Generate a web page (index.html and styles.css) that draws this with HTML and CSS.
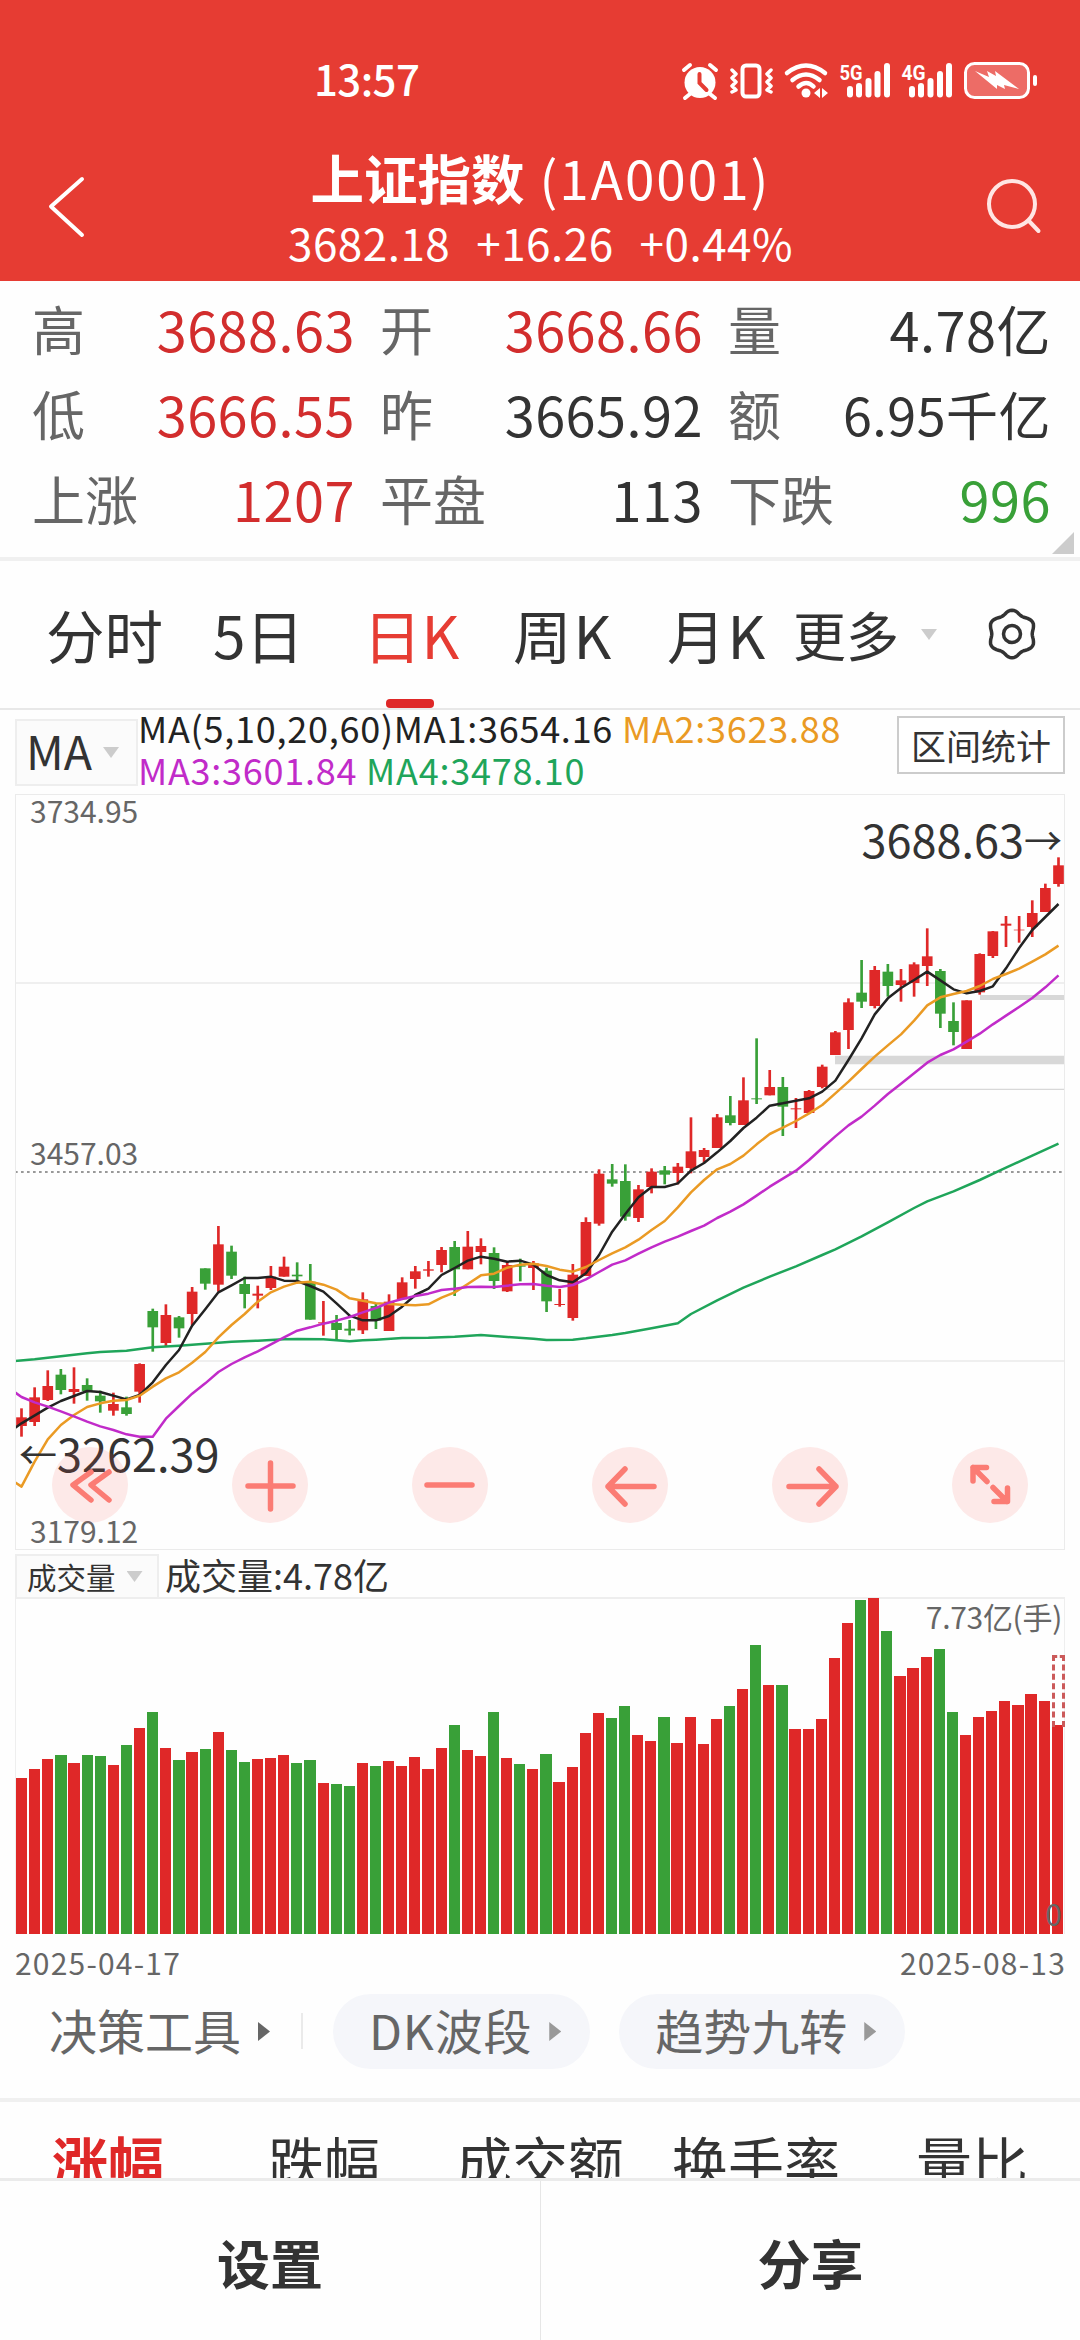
FILE: index.html
```html
<!DOCTYPE html>
<html lang="zh-CN">
<head>
    <meta charset="UTF-8">
    <meta name="viewport" content="width=device-width, initial-scale=1.0">
    <title>上证指数</title>

    <link rel="stylesheet" href="styles.css">
</head>
<body>

    <header class="header">
        <div class="status">
            <span class="clock">13:57</span>
            <svg class="statusIcons" width="360" height="40" viewBox="0 0 360 40">
                <!-- alarm -->
                <circle cx="19" cy="20.500" r="15.500" fill="#fff"/>
                <path d="M3 8l6-5M35 8l-6-5M9 32l-5 4M29 32l5 4" stroke="#fff" stroke-width="4" stroke-linecap="round"/>
                <path d="M18.500 12v9l7 7" stroke="#e63c33" stroke-width="4" fill="none" stroke-linecap="round"/>
                <!-- vibrate -->
                <rect x="61.500" y="3.500" width="17" height="31" rx="3.500" fill="none" stroke="#fff" stroke-width="4"/>
                <path d="M51 8l4 4-4 4 4 4-4 4 4 4-4 2M90 8l-4 4 4 4-4 4 4 4-4 4 4 2" fill="none" stroke="#fff" stroke-width="3.500" stroke-linejoin="round" stroke-linecap="round"/>
                <!-- wifi -->
                <g fill="none" stroke="#fff" stroke-width="4.500" stroke-linecap="round">
                    <path d="M106 11q19-15 38 0"/>
                    <path d="M111.500 18q13.500-11 27 0"/>
                    <path d="M117.500 24.500q8-7 15 0"/>
                </g>
                <circle cx="125" cy="31" r="4.500" fill="#fff"/>
                <path d="M133 31l6-5v10zM147 31l-6-5v10z" fill="#fff"/>
                <!-- signals -->
                <g fill="#fff">
                    <text x="158.500" y="17.500" class="net" textLength="23" lengthAdjust="spacingAndGlyphs">5G</text>
                    <rect x="166" y="24" width="6" height="11.500" rx="3"/>
                    <rect x="175" y="21" width="6" height="14.500" rx="3"/>
                    <rect x="184.500" y="16" width="6" height="19.500" rx="3"/>
                    <rect x="193.500" y="9" width="6" height="26.500" rx="3"/>
                    <rect x="203" y="1" width="6" height="34.500" rx="3"/>
                    <text x="220.500" y="17.500" class="net" textLength="24" lengthAdjust="spacingAndGlyphs">4G</text>
                    <rect x="228" y="24" width="6" height="11.500" rx="3"/>
                    <rect x="237" y="21" width="6" height="14.500" rx="3"/>
                    <rect x="246.500" y="16" width="6" height="19.500" rx="3"/>
                    <rect x="256" y="9" width="6" height="26.500" rx="3"/>
                    <rect x="265" y="1" width="6" height="34.500" rx="3"/>
                </g>
                <!-- battery -->
                <rect x="284.500" y="1.500" width="63" height="34" rx="9" fill="#ed6c66" stroke="#fff" stroke-width="3"/>
                <rect x="352" y="13" width="4" height="11" rx="2" fill="#fff"/>
                <path d="M294 9l14 6-2-6 9 5-1-5 24 18-15-4 1 4-8-4v4z" fill="#fff"/>
            </svg>
        </div>
        <div class="titleBar">
            <svg class="back" width="40" height="64" viewBox="0 0 40 64" fill="none" stroke="#fff" stroke-width="4">
                <path d="M35 4L4 31.500 35 60" stroke-linecap="round" stroke-linejoin="round"/>
            </svg>
            <div class="stock">
                <h1><b>上证指数</b> <span>(1A0001)</span></h1>
                <p><span>3682.18</span><span>+16.26</span><span>+0.44%</span></p>
            </div>
            <svg class="search" width="56" height="56" viewBox="0 0 56 56" fill="none" stroke="#ffe5e3" stroke-width="4" stroke-linecap="round">
                <circle cx="26" cy="26" r="23"/>
                <path d="M42.500 42.500L52.500 53"/>
            </svg>
        </div>
    </header>

    <section class="quote">
        <div class="item"><span>高</span><b class="up">3688.63</b></div>
        <div class="item"><span>开</span><b class="up">3668.66</b></div>
        <div class="item"><span>量</span><b>4.78亿</b></div>
        <div class="item"><span>低</span><b class="up">3666.55</b></div>
        <div class="item"><span>昨</span><b>3665.92</b></div>
        <div class="item"><span>额</span><b class="long">6.95千亿</b></div>
        <div class="item"><span>上涨</span><b class="up">1207</b></div>
        <div class="item"><span>平盘</span><b>113</b></div>
        <div class="item"><span>下跌</span><b class="down">996</b></div>
        <i class="corner"></i>
    </section>

    <nav class="period">
        <span>分时</span>
        <span>5日</span>
        <span class="active">日K</span>
        <span class="wide">周K</span>
        <span class="wide">月K</span>
        <span class="more">更多</span>
        <i class="arrowDown"></i>
        <svg class="gear" width="52" height="52" viewBox="0 0 52 52" fill="none" stroke="#333" stroke-width="3.500" stroke-linejoin="round">
            <path id="gearPath" d=""/>
            <circle cx="26" cy="26" r="8.500"/>
        </svg>
    </nav>

    <div class="maRow">
        <div class="select maSelect">MA<i class="arrowDown"></i></div>
        <div class="maText">
            <p><span class="ma1">MA(5,10,20,60)MA1:3654.16</span> <span class="ma2">MA2:3623.88</span></p>
            <p><span class="ma3">MA3:3601.84</span> <span class="ma4">MA4:3478.10</span></p>
        </div>
        <button class="range">区间统计</button>
    </div>

    <div class="kChart">
        <svg id="kline" width="1050" height="756" viewBox="45 -198 3150 2268"></svg>
        <span class="axis axisTop">3734.95</span>
        <span class="axis axisMid">3457.03</span>
        <span class="axis axisBottom">3179.12</span>
        <span class="mark high">3688.63<em>→</em></span>
        <span class="mark low"><em>←</em>3262.39</span>
        <div class="tools">
            <svg viewBox="0 0 76 76"><path d="M39 25L21 38l18 15M57 25L39 38l18 15"/></svg>
            <svg viewBox="0 0 76 76"><path d="M16 39h45M38.500 16v46"/></svg>
            <svg viewBox="0 0 76 76"><path d="M15 38h45"/></svg>
            <svg viewBox="0 0 76 76"><path d="M16 39.500h46M33 22L16 39.500 33 57"/></svg>
            <svg viewBox="0 0 76 76"><path d="M17 39.500h47M47 22l17 17.500L47 57"/></svg>
            <svg viewBox="0 0 76 76"><path d="M21 34V20.500h13.500M21 20.500l14 14M41 40.500l14 14M55.500 41v13.500H42"/></svg>
        </div>
    </div>

    <div class="volRow">
        <div class="select volSelect">成交量<i class="arrowDown"></i></div>
        <span>成交量:4.78亿</span>
    </div>
    <div class="volChart">
        <div id="bars" class="bars"></div>
        <span class="volMax">7.73亿(手)</span>
        <span class="volZero">0</span>
        <i class="forecast"></i>
    </div>
    <div class="dates"><span>2025-04-17</span><span>2025-08-13</span></div>

    <div class="decision">
        <span class="first">决策工具<i class="arrowRight"></i></span>
        <span class="pill dk">DK波段<i class="arrowRight"></i></span>
        <span class="pill">趋势九转<i class="arrowRight"></i></span>
    </div>

    <nav class="rank">
        <span class="active">涨幅</span>
        <span>跌幅</span>
        <span>成交额</span>
        <span>换手率</span>
        <span>量比</span>
    </nav>

    <footer class="footer">
        <span>设置</span>
        <span>分享</span>
    </footer>

    <script>
/*******************k line data**************/
    // color, high, body top, body bottom, low (3 units = 1px)
    const candles = [
        "r",1645,1672,1698,1730, "r",1582,1612,1686,1698, "r",1531,1578,1620,1623, "g",1527,1544,1590,1603,
        "r",1522,1587,1596,1631, "g",1555,1575,1593,1622, "g",1592,1607,1624,1658, "r",1598,1632,1652,1667,
        "g",1610,1642,1662,1667, "r",1510,1512,1595,1628, "g",1346,1353,1402,1475, "r",1333,1365,1449,1460,
        "g",1368,1372,1405,1433, "r",1281,1295,1362,1395, "g",1225,1225,1271,1289, "r",1098,1153,1274,1295,
        "g",1157,1175,1247,1257, "g",1250,1272,1302,1345, "r",1277,1301,1307,1345, "r",1218,1250,1284,1290,
        "r",1190,1220,1250,1250, "g",1207,1244,1249,1260, "g",1212,1265,1379,1379, "r",1323,1387,1390,1427,
        "g",1365,1389,1410,1442, "g",1380,1406,1412,1426, "r",1297,1318,1411,1422, "g",1330,1338,1382,1407,
        "r",1303,1325,1413,1413, "r",1252,1267,1318,1318, "r",1218,1234,1257,1286, "r",1203,1228,1232,1250,
        "r",1161,1170,1215,1237, "g",1143,1161,1228,1308, "r",1113,1160,1228,1228, "r",1135,1158,1176,1213,
        "g",1162,1179,1263,1287, "r",1206,1215,1294,1296, "g",1196,1216,1220,1264, "r",1203,1210,1224,1290,
        "g",1223,1232,1324,1356, "r",1287,1332,1335,1340, "r",1212,1244,1374,1382, "r",1072,1086,1248,1248,
        "r",928,941,1091,1097, "g",912,958,971,980, "g",913,963,1070,1082, "r",975,988,1074,1086,
        "r",925,935,981,1000, "g",918,931,944,973, "r",909,920,939,973, "r",772,874,924,940,
        "r",864,870,891,908, "r",762,772,864,864, "g",708,766,789,796, "r",652,721,795,795,
        "g",535,715,718,732, "r",630,681,706,706, "g",651,681,740,828, "r",714,745,748,804,
        "r",690,693,759,762, "r",614,620,681,685, "r",513,517,585,585, "r",415,427,510,567,
        "g",300,398,425,444, "r",318,330,438,445, "g",312,335,378,410, "r",327,361,375,425,
        "r",307,313,369,410, "r",205,289,318,378, "g",327,333,461,504, "g",427,483,516,556,
        "r",421,421,567,567, "r",280,282,397,404, "r",213,214,288,294, "r",168,191,197,261,
        "r",168,209,211,248, "r",121,159,201,231, "r",71,84,156,156, "r",-8,16,72,80
    ];

    // [index, y], -0.5 is the left edge
    const ma5 = [[-.5,1704],[0,1690],[2,1643],[3,1623],[5,1593],[6,1596],[8,1618],[9,1605],[10,1567],[11,1515],[12,1470],[13,1397],[14,1348],[15,1297],[16,1276],[17,1254],[18,1254],[19,1250],[20,1262],[21,1263],[22,1278],[23,1295],[24,1330],[25,1367],[26,1381],[27,1381],[28,1368],[29,1340],[30,1305],[31,1286],[32,1245],[33,1224],[34,1202],[35,1190],[36,1196],[37,1205],[38,1202],[39,1214],[40,1245],[41,1261],[42,1267],[43,1240],[44,1185],[45,1115],[46,1062],[47,1012],[48,981],[49,981],[50,970],[51,932],[52,909],[53,877],[54,843],[55,804],[56,773],[57,737],[58,730],[59,722],[60,715],[61,695],[62,662],[63,600],[64,535],[65,463],[66,415],[67,384],[68,360],[69,335],[70,361],[71,388],[72,400],[73,393],[74,379],[75,325],[76,264],[77,210],[78,171],[79,132]];
    const ma10 = [[-.5,1867],[0,1880],[1,1805],[2,1738],[3,1695],[4,1665],[5,1641],[6,1630],[7,1622],[8,1620],[9,1607],[10,1580],[11,1555],[12,1537],[13,1508],[14,1476],[15,1432],[16,1395],[17,1362],[18,1325],[19,1297],[20,1280],[21,1268],[22,1265],[23,1274],[24,1289],[25,1315],[26,1322],[27,1330],[28,1332],[29,1334],[30,1336],[31,1333],[32,1313],[33,1297],[34,1272],[35,1246],[36,1241],[37,1223],[38,1214],[39,1211],[40,1218],[41,1229],[42,1235],[43,1221],[44,1200],[45,1180],[46,1162],[47,1139],[48,1110],[49,1083],[50,1042],[51,997],[52,960],[53,928],[54,912],[55,887],[56,853],[57,822],[58,803],[59,783],[60,760],[61,735],[62,700],[63,665],[64,627],[65,590],[66,556],[67,523],[68,482],[69,436],[70,412],[71,402],[72,393],[73,378],[74,357],[75,342],[76,326],[77,305],[78,283],[79,257]];
    const ma20 = [[-.5,1597],[0,1611],[1,1627],[2,1640],[3,1654],[4,1669],[5,1685],[6,1699],[7,1710],[8,1723],[9,1730],[10,1730],[11,1676],[12,1638],[13,1601],[14,1570],[15,1536],[16,1512],[17,1492],[18,1474],[19,1453],[20,1432],[21,1412],[22,1402],[23,1391],[24,1382],[25,1371],[26,1357],[27,1344],[28,1328],[29,1317],[30,1308],[31,1301],[32,1290],[33,1286],[34,1281],[35,1280],[36,1281],[37,1277],[38,1273],[39,1272],[40,1277],[41,1281],[42,1275],[43,1258],[44,1236],[45,1214],[46,1201],[47,1181],[48,1162],[49,1145],[50,1130],[51,1113],[52,1097],[53,1074],[54,1055],[55,1033],[56,1007],[57,980],[58,956],[59,932],[60,900],[61,864],[62,829],[63,796],[64,770],[65,737],[66,702],[67,671],[68,640],[69,608],[70,585],[71,568],[72,545],[73,521],[74,493],[75,467],[76,441],[77,414],[78,382],[79,346]];
    const ma60 = [[-.5,1503],[1,1498],[3,1489],[5,1480],[6,1476],[8,1472],[10,1462],[12,1457],[14,1451],[16,1445],[18,1442],[20,1438],[21,1437],[23,1438],[24,1441],[25,1444],[26,1441],[27,1439],[29,1434],[31,1433],[33,1430],[35,1425],[37,1431],[39,1436],[40,1440],[42,1439],[43,1435],[45,1425],[46,1419],[48,1405],[50,1390],[51,1362],[53,1321],[55,1283],[57,1250],[59,1219],[61,1185],[62,1168],[64,1129],[66,1087],[68,1044],[69,1024],[71,994],[73,960],[75,923],[77,887],[79,851]];

/*******************draw k line**************/
    function px(i){ return (64.5 + i * 39.38).toFixed(1); }

    function drawLine(points,color){
        const d = points.map(p => px(p[0]) + "," + p[1]).join(" ");
        return '<polyline points="' + d + '" fill="none" stroke="' + color + '" stroke-width="7.500" stroke-linejoin="round"/>';
    }

    // grid and gap areas
    let k = '<path d="M45 369H3195M45 1503H3195" stroke="#efefef" stroke-width="6"/>';
    k += '<path d="M45 936H3195" stroke="#999" stroke-width="6" stroke-dasharray="8 10"/>';
    k += '<path d="M2940 405H3195V420H2940zM2505 587H3195V613H2505zM2470 686H3195V690H2470z" fill="#d8d8d8"/>';

    for(let n = 0; n < candles.length; n += 5){
        const [c,h,t,b,l] = candles.slice(n, n + 5);
        const x = Number(px(n / 5));
        const color = c == "r" ? "#df2828" : "#39a038";
        k += '<rect x="' + (x - 4) + '" y="' + h + '" width="8" height="' + (l - h) + '" fill="' + color + '"/>';
        k += '<rect x="' + (x - 16) + '" y="' + t + '" width="32" height="' + (b - t) + '" fill="' + color + '"/>';
    }
    k += drawLine(ma60,"#1fa55a") + drawLine(ma5,"#222") + drawLine(ma10,"#ea9a24") + drawLine(ma20,"#c12bc9");
    document.getElementById("kline").innerHTML = k;

/*******************volume bars**************/
    const vol = "r468 r495 r525 g537 r512 g536 g535 r507 g568 r618 g666 r558 g521 r546 g556 r606 g553 g516 r525 r529 r538 g514 g522 r453 g449 g445 r512 g503 r519 r504 r530 r496 r557 g628 r553 r534 g665 r528 g509 r494 g541 r456 r501 r602 r664 g647 g683 r596 r579 g650 r572 r652 r570 r644 g684 r735 g866 r746 g746 r614 r616 r644 r827 r934 g1001 r1008 g909 r774 r797 r831 g854 g665 r598 r652 r668 r698 r686 r719 r700 r626";
    document.getElementById("bars").innerHTML = vol.split(" ").map(function(v){
        return '<i class="' + (v[0] == "r" ? "barUp" : "barDown") + '" style="height:' + (v.slice(1) / 3).toFixed(1) + 'px"></i>';
    }).join("");

/*******************gear outline**************/
    let g = "";
    for(let a = 0; a < 360; a += 5){
        const t = a * Math.PI / 180;
        const r = 22 + 1.8 * Math.cos(6 * t + Math.PI);
        g += (a ? "L" : "M") + (26 + r * Math.cos(t)).toFixed(1) + " " + (26 + r * Math.sin(t)).toFixed(1);
    }
    document.getElementById("gearPath").setAttribute("d", g + "z");
    </script>
</body>
</html>
```
FILE: styles.css
```css
*{box-sizing: border-box;}
body{
    margin: 0;
    width: 1080px;
    height: 2340px;
    overflow: hidden;
    display: flex;
    flex-direction: column;
    background-color: #fefefe;
    color: #333;
    font-family: "Noto Sans CJK SC", "Noto Sans", sans-serif;
}
body > *{flex-shrink: 0;}
h1, p{margin: 0; font-weight: normal;}
i, em{font-style: normal;}

/* header */
.header{
    height: 281px;
    background-color: #e63c33;
    color: #fff;
}
.status{
    display: flex;
    height: 140px;
    padding: 62px 39px 0 314px;
    justify-content: space-between;
}
.clock{
    margin-top: -4px;
    font-size: 42px;
    font-weight: 500;
    line-height: 40px;
    letter-spacing: -0.600px;
}
.statusIcons{overflow: visible;}
.net{font: 700 20px Roboto, sans-serif;}
.titleBar{
    display: flex;
    justify-content: space-between;
    padding: 0 38px 0 47px;
}
.back{margin-top: 35px;}
.search{margin-top: 38px;}
.stock{
    margin: -2px 0 0 8px;
    text-align: center;
}
.stock h1{
    height: 74px;
    font-size: 53.500px;
    line-height: 77px;
    white-space: nowrap;
}
.stock h1 span{
    margin-left: 3px;
    font-size: 53px;
    letter-spacing: 2px;
}
.stock p{
    display: flex;
    justify-content: center;
    gap: 26px;
    font-size: 44px;
    line-height: 61px;
}
.stock p span{letter-spacing: 0.500px;}

/* quote */
.quote{
    position: relative;
    display: grid;
    grid-template-columns: 320px 320px 320px;
    column-gap: 28px;
    grid-auto-rows: 85px;
    height: 280px;
    padding: 5px 30px 0 32px;
    border-bottom: 4px solid #f0f0f0;
    font-size: 53px;
    line-height: 85px;
}
.item{display: flex; justify-content: space-between;}
.item span{color: #666;}
.item b{
    margin-right: -3px;
    font-weight: 400;
    letter-spacing: 0.500px;
    font-size: 54px;
}
.item .long{font-size: 52px;}
.item .up{color: #d22d2d;}
.item .down{color: #39a038;}
.corner{
    position: absolute;
    right: 6px;
    bottom: 3px;
    border-left: 22px solid transparent;
    border-bottom: 22px solid #ccc;
}

/* period tabs */
.period{
    display: grid;
    grid-template-columns: 167px 150px 150px 154px 126px 128px 65px 80px;
    height: 149px;
    padding-left: 46px;
    border-bottom: 2px solid #e8e8e8;
    font-size: 58.500px;
    line-height: 146px;
    white-space: nowrap;
}
.period .active{
    position: relative;
    color: #e63c33;
}
.period .wide{letter-spacing: 2px;}
.period .active::after{
    content: "";
    position: absolute;
    left: 23px;
    bottom: 0;
    width: 48px;
    height: 9px;
    border-radius: 4px;
    background-color: #df2828;
}
.period .more{font-size: 53px;}
.arrowDown{
    display: inline-block;
    align-self: center;
    width: 16px;
    height: 11px;
    background-color: #ccc;
    clip-path: polygon(0 0, 100% 0, 50% 100%);
}
.gear{margin-top: 47px;}

/* ma row */
.maRow{
    display: flex;
    height: 84px;
    padding: 6px 15px 0;
}
.select{
    display: flex;
    border: 2px solid #eee;
    background-color: #fbfbfb;
}
.maSelect{
    width: 123px;
    height: 67px;
    margin-top: 3px;
    padding-left: 9px;
    gap: 11px;
    font-size: 46.500px;
    line-height: 58px;
}
.maText{
    flex: 1;
    font-size: 36px;
    line-height: 42px;
    letter-spacing: 0.750px;
    white-space: nowrap;
    margin-top: -10px;
}
.ma1{color: #222;}
.ma2{color: #ea9a24;}
.ma3{color: #c12bc9;}
.ma4{color: #1fa55a;}
.range{
    width: 168px;
    height: 58px;
    padding: 0;
    border: 2px solid #ccc;
    background-color: #fff;
    color: #333;
    font: 35px/50px "Noto Sans CJK SC", sans-serif;
}

/* k chart */
.kChart{
    position: relative;
    height: 756px;
    margin: 0 15px;
}
.kChart::before{
    content: "";
    position: absolute;
    inset: 0;
    border: 1px solid #ebebeb;
}
#kline{display: block;}
.axis{
    position: absolute;
    left: 15px;
    color: #666;
    font-size: 30px;
    line-height: 30px;
}
.axisTop{top: 1px;}
.axisMid{top: 343px;}
.axisBottom{top: 721px;}
.mark{
    position: absolute;
    display: flex;
    font-size: 45px;
    line-height: 50px;
}
.mark em{font-size: 38px;}
.high{top: 20px; right: 3px;}
.low{top: 634px; left: 4px;}
.tools{
    position: absolute;
    left: -15px;
    top: 653px;
    width: 1080px;
    display: grid;
    grid-template-columns: repeat(6, 1fr);
    justify-items: center;
}
.tools svg{
    width: 76px;
    height: 76px;
    border-radius: 50%;
    background-color: rgba(243, 80, 70, 0.12);
    fill: none;
    stroke: #fb7c74;
    stroke-width: 5.500px;
    stroke-linecap: round;
    stroke-linejoin: round;
}

/* volume */
.volRow{
    display: flex;
    height: 47px;
    padding: 4px 15px 0;
    font-size: 36px;
    line-height: 40px;
}
.volSelect{
    width: 144px;
    height: 43px;
    margin-right: 6px;
    padding-left: 10px;
    gap: 11px;
    border-bottom: none;
    font-size: 29.500px;
}
.volChart{
    position: relative;
    height: 337px;
    margin: 0 15px;
    border: 2px solid #eee;
    border-width: 2px 1px 0;
}
.bars{
    display: flex;
    align-items: flex-end;
    justify-content: space-between;
    height: 337px;
    margin-top: -2px;
}
.bars i{width: 11.200px;}
.barUp{background-color: #df2828;}
.barDown{background-color: #39a038;}
.volMax, .volZero{
    position: absolute;
    right: 2px;
    color: #666;
    font-size: 30px;
    line-height: 30px;
}
.volMax{top: 2px; letter-spacing: -0.300px;}
.volZero{bottom: 6px;}
.forecast{
    position: absolute;
    right: -1px;
    top: 56px;
    width: 13px;
    height: 72px;
    border: 3px dashed #cb5a5a;
    border-bottom: none;
}
.dates{
    display: flex;
    justify-content: space-between;
    height: 60px;
    padding: 7px 14px 8px 15px;
    color: #666;
    font-size: 30px;
    line-height: 42px;
}
.dates span{letter-spacing: 1.200px;}

/* decision tools */
.decision{
    display: flex;
    height: 108px;
    border-bottom: 4px solid #f0f0f0;
    color: #666;
    font-size: 48px;
    line-height: 71px;
}
.arrowRight{
    display: inline-block;
    width: 12px;
    height: 19px;
    background-color: #999;
    clip-path: polygon(0 0, 100% 50%, 0 100%);
}
.first, .pill{
    display: flex;
    height: 75px;
    gap: 17px;
}
.first .arrowRight, .pill .arrowRight{margin-top: 28px;}
.first{
    position: relative;
    width: 333px;
    padding-left: 49px;
}
.first .arrowRight{background-color: #666;}
.first::after{
    content: "";
    position: absolute;
    left: 301px;
    top: 19px;
    width: 2px;
    height: 36px;
    background-color: #eaeaea;
}
.pill{
    margin-right: 29px;
    padding: 0 29px 0 36px;
    border-radius: 38px;
    background-color: #f5f6fa;
}
.dk{letter-spacing: 0.800px;}

/* ranking tabs */
.rank{
    display: grid;
    grid-template-columns: repeat(5, 216px);
    height: 76px;
    overflow: hidden;
    font-size: 56px;
    line-height: 116px;
    text-align: center;
}
.rank .active{color: #df2828; font-weight: 700;}

.footer{
    display: grid;
    grid-template-columns: 1fr 1fr;
    height: 162px;
    border-top: 3px solid #ebebeb;
    font-size: 53px;
    font-weight: 700;
    line-height: 163px;
    text-align: center;
}
.footer span{height: 159px;}
.footer span + span{border-left: 1px solid #e6e6e6;}
```
